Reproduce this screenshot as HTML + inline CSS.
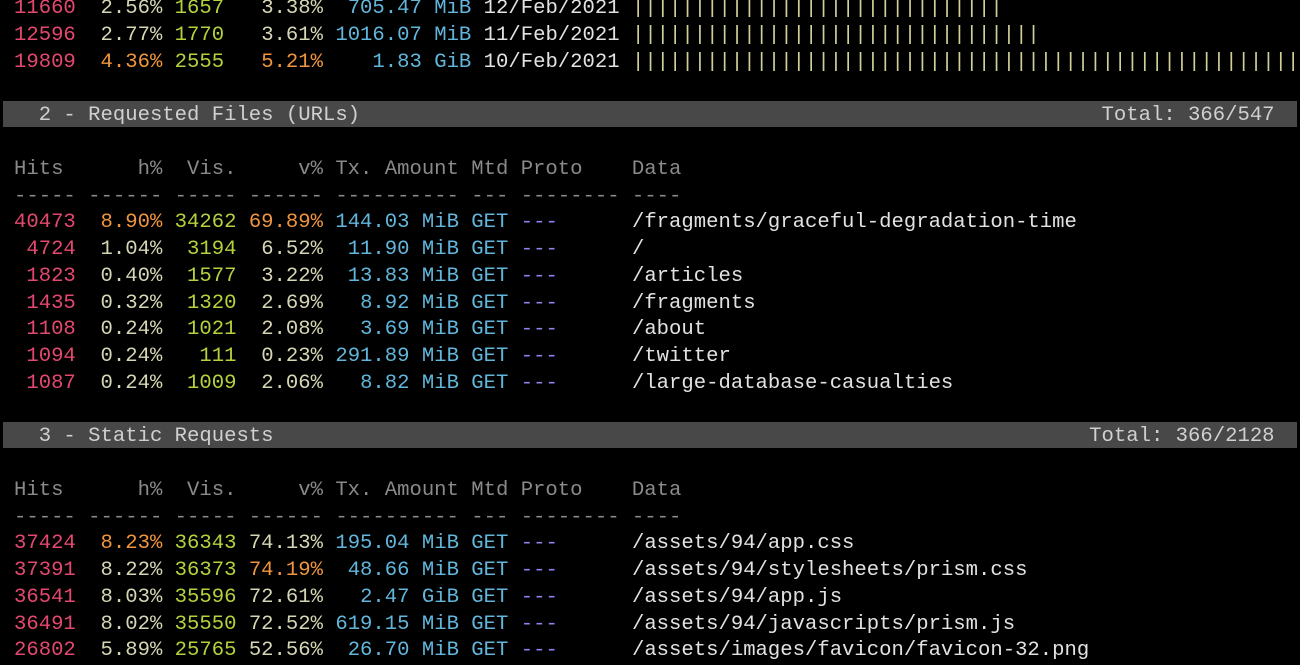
<!DOCTYPE html>
<html><head><style>
html,body{margin:0;padding:0;background:#000;width:1300px;height:650px;overflow:hidden}
pre{position:absolute;left:14px;top:-3.6px;margin:0;font-family:"Liberation Mono","DejaVu Sans Mono",monospace;font-size:20.6px;line-height:26.75px;color:#dcdcdc;white-space:pre}
.bar{position:absolute;left:3px;width:1294px;height:26.75px;background:#484848}
.r{color:#e4486e}.p{color:#d6d6b4}.o{color:#f0953e}.g{color:#b4d23c}.b{color:#62b6dc}.w{color:#e2e2e2}.y{color:#cfcf96}.h{color:#8a8a8a}.v{color:#8c84f0}.t{color:#d0d0d0}
</style></head><body>
<div class="bar" style="top:100.6px"></div>
<div class="bar" style="top:421.6px"></div>
<pre><span class="r">11660</span>  <span class="p">2.56%</span> <span class="g">1657</span>   <span class="p">3.38%</span>  <span class="b">705.47 MiB</span> <span class="w">12/Feb/2021</span> <span class="y">||||||||||||||||||||||||||||||</span>
<span class="r">12596</span>  <span class="p">2.77%</span> <span class="g">1770</span>   <span class="p">3.61%</span> <span class="b">1016.07 MiB</span> <span class="w">11/Feb/2021</span> <span class="y">|||||||||||||||||||||||||||||||||</span>
<span class="r">19809</span>  <span class="o">4.36%</span> <span class="g">2555</span>   <span class="o">5.21%</span>    <span class="b">1.83 GiB</span> <span class="w">10/Feb/2021</span> <span class="y">|||||||||||||||||||||||||||||||||||||||||||||||||||||||</span>

<span class="t">  2 - Requested Files (URLs)                                                            Total: 366/547</span>

<span class="h">Hits      h%  Vis.     v% Tx. Amount Mtd Proto    Data</span>
<span class="h">----- ------ ----- ------ ---------- --- -------- ----</span>
<span class="r">40473</span>  <span class="o">8.90%</span> <span class="g">34262</span> <span class="o">69.89%</span> <span class="b">144.03 MiB GET</span> <span class="v">---</span>      <span class="w">/fragments/graceful-degradation-time</span>
<span class="r"> 4724</span>  <span class="p">1.04%</span> <span class="g"> 3194</span>  <span class="p">6.52%</span>  <span class="b">11.90 MiB GET</span> <span class="v">---</span>      <span class="w">/</span>
<span class="r"> 1823</span>  <span class="p">0.40%</span> <span class="g"> 1577</span>  <span class="p">3.22%</span>  <span class="b">13.83 MiB GET</span> <span class="v">---</span>      <span class="w">/articles</span>
<span class="r"> 1435</span>  <span class="p">0.32%</span> <span class="g"> 1320</span>  <span class="p">2.69%</span>   <span class="b">8.92 MiB GET</span> <span class="v">---</span>      <span class="w">/fragments</span>
<span class="r"> 1108</span>  <span class="p">0.24%</span> <span class="g"> 1021</span>  <span class="p">2.08%</span>   <span class="b">3.69 MiB GET</span> <span class="v">---</span>      <span class="w">/about</span>
<span class="r"> 1094</span>  <span class="p">0.24%</span> <span class="g">  111</span>  <span class="p">0.23%</span> <span class="b">291.89 MiB GET</span> <span class="v">---</span>      <span class="w">/twitter</span>
<span class="r"> 1087</span>  <span class="p">0.24%</span> <span class="g"> 1009</span>  <span class="p">2.06%</span>   <span class="b">8.82 MiB GET</span> <span class="v">---</span>      <span class="w">/large-database-casualties</span>

<span class="t">  3 - Static Requests                                                                  Total: 366/2128</span>

<span class="h">Hits      h%  Vis.     v% Tx. Amount Mtd Proto    Data</span>
<span class="h">----- ------ ----- ------ ---------- --- -------- ----</span>
<span class="r">37424</span>  <span class="o">8.23%</span> <span class="g">36343</span> <span class="p">74.13%</span> <span class="b">195.04 MiB GET</span> <span class="v">---</span>      <span class="w">/assets/94/app.css</span>
<span class="r">37391</span>  <span class="p">8.22%</span> <span class="g">36373</span> <span class="o">74.19%</span>  <span class="b">48.66 MiB GET</span> <span class="v">---</span>      <span class="w">/assets/94/stylesheets/prism.css</span>
<span class="r">36541</span>  <span class="p">8.03%</span> <span class="g">35596</span> <span class="p">72.61%</span>   <span class="b">2.47 GiB GET</span> <span class="v">---</span>      <span class="w">/assets/94/app.js</span>
<span class="r">36491</span>  <span class="p">8.02%</span> <span class="g">35550</span> <span class="p">72.52%</span> <span class="b">619.15 MiB GET</span> <span class="v">---</span>      <span class="w">/assets/94/javascripts/prism.js</span>
<span class="r">26802</span>  <span class="p">5.89%</span> <span class="g">25765</span> <span class="p">52.56%</span>  <span class="b">26.70 MiB GET</span> <span class="v">---</span>      <span class="w">/assets/images/favicon/favicon-32.png</span></pre>
</body></html>
